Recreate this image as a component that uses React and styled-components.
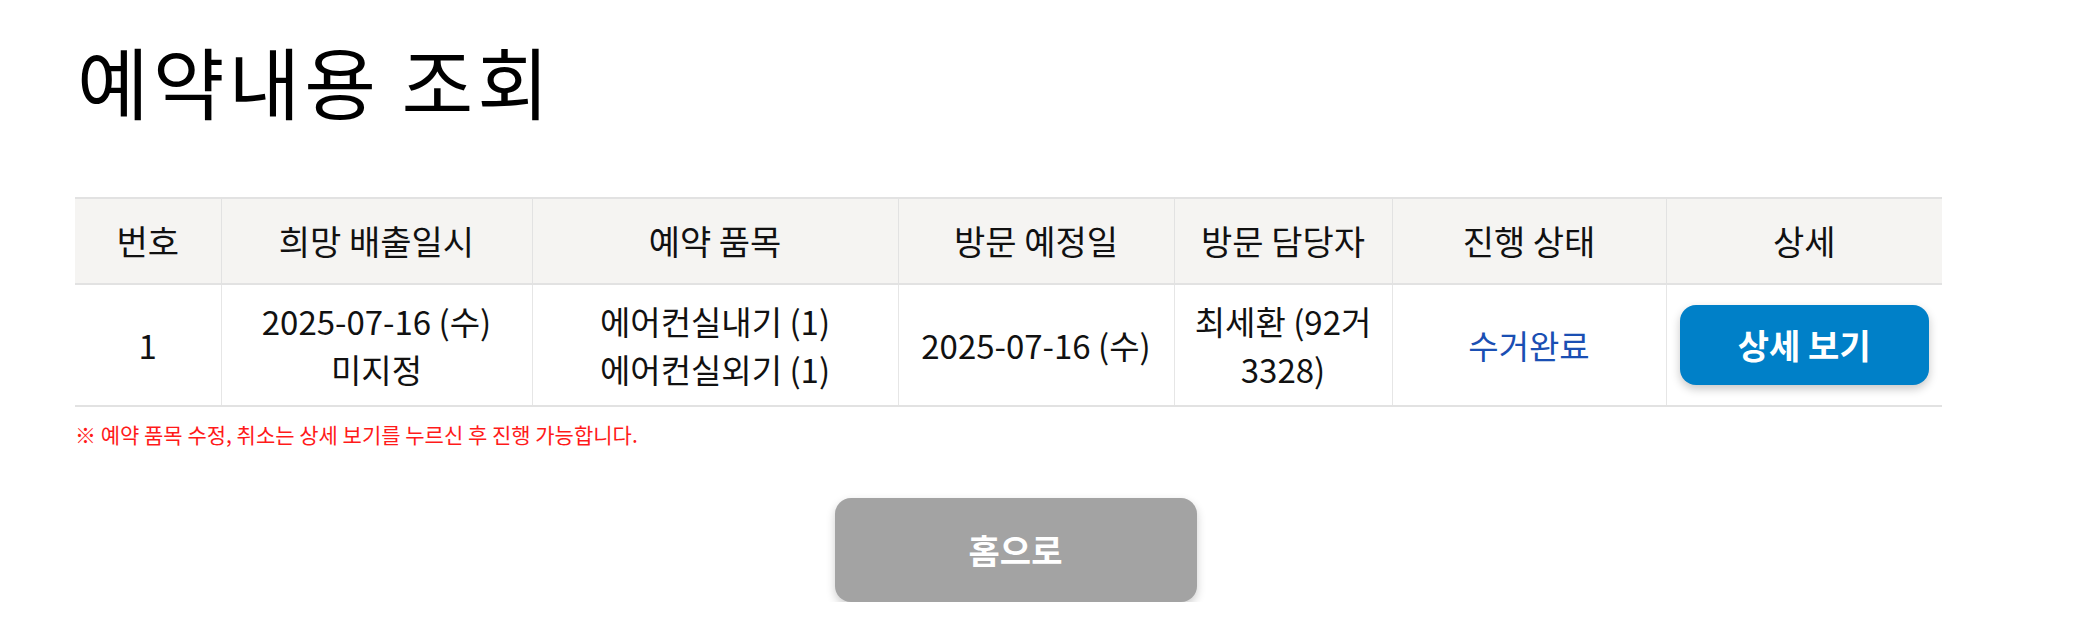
import React from "react";
import styled, { createGlobalStyle } from "styled-components";

const GlobalStyle = createGlobalStyle`
  body {
    margin: 0;
    background: #fff;
    font-family: "Noto Sans CJK KR", "Noto Sans", sans-serif;
    color: #111;
  }
`;

const reservations = [
  {
    no: 1,
    wishDate: ["2025-07-16 (수)", "미지정"],
    items: ["에어컨실내기 (1)", "에어컨실외기 (1)"],
    visitDate: "2025-07-16 (수)",
    manager: "최세환 (92거 3328)",
    status: "수거완료",
  },
];

const columns = [
  { label: "번호", width: 146 },
  { label: "희망 배출일시", width: 311 },
  { label: "예약 품목", width: 366 },
  { label: "방문 예정일", width: 276 },
  { label: "방문 담당자", width: 218 },
  { label: "진행 상태", width: 274 },
  { label: "상세", width: 276 },
];

export default function App() {
  return (
    <Page>
      <GlobalStyle />
      <Title>예약내용 조회</Title>

      <Table>
        <colgroup>
          {columns.map((c) => (
            <col key={c.label} style={{ width: c.width }} />
          ))}
        </colgroup>
        <thead>
          <tr>
            {columns.map((c) => (
              <Th key={c.label}>{c.label}</Th>
            ))}
          </tr>
        </thead>
        <tbody>
          {reservations.map((r) => (
            <tr key={r.no}>
              <Td>{r.no}</Td>
              <Td>
                {r.wishDate.map((line) => (
                  <Line key={line}>{line}</Line>
                ))}
              </Td>
              <Td>
                {r.items.map((line) => (
                  <Line key={line}>{line}</Line>
                ))}
              </Td>
              <Td>{r.visitDate}</Td>
              <Td $narrow>{r.manager}</Td>
              <Td>
                <Status>{r.status}</Status>
              </Td>
              <Td $pad>
                <DetailButton>상세 보기</DetailButton>
              </Td>
            </tr>
          ))}
        </tbody>
      </Table>

      <Notice>※ 예약 품목 수정, 취소는 상세 보기를 누르신 후 진행 가능합니다.</Notice>

      <Footer>
        <HomeButton>홈으로</HomeButton>
      </Footer>
    </Page>
  );
}

const Page = styled.div`
  width: 1867px;
  padding: 34px 0 0 75px;
`;

const Title = styled.h1`
  margin: 0 0 69px 2px;
  font-size: 78px;
  font-weight: 400;
  letter-spacing: 4px;
  line-height: 1.2;
  color: #000;
`;

const Table = styled.table`
  width: 100%;
  border-collapse: collapse;
  table-layout: fixed;
  border-top: 2px solid #e2e2e2;
`;

const Th = styled.th`
  height: 84px;
  padding: 0;
  background: #f5f4f2;
  border-bottom: 2px solid #e2e2e2;
  border-left: 1px solid #e2e2e2;
  font-size: 34px;
  font-weight: 400;
  color: #111;
  &:first-child {
    border-left: none;
  }
`;

const Td = styled.td`
  height: 120px;
  padding: ${(p) => (p.$pad ? "0 13px" : p.$narrow ? "0 12px" : "0 8px")};
  border-bottom: 2px solid #e2e2e2;
  border-left: 1px solid #e6e6e6;
  text-align: center;
  font-size: 33px;
  line-height: 48px;
  color: #111;
  &:first-child {
    border-left: none;
  }
`;

const Line = styled.div`
  white-space: nowrap;
`;

const Status = styled.span`
  color: #1a4fb3;
`;

const DetailButton = styled.button`
  width: 100%;
  height: 80px;
  border: none;
  border-radius: 16px;
  background: #0080c8;
  color: #fff;
  font-family: inherit;
  font-size: 34px;
  font-weight: 700;
  box-shadow: 0 4px 10px rgba(0, 0, 0, 0.22);
  cursor: pointer;
`;

const Notice = styled.p`
  margin: 12px 0 0;
  font-size: 21px;
  color: #ff1a1a;
`;

const Footer = styled.div`
  display: flex;
  justify-content: center;
  margin: 49px 0 0 14px;
`;

const HomeButton = styled.button`
  width: 362px;
  height: 104px;
  border: none;
  border-radius: 16px;
  background: #a3a3a3;
  color: #fff;
  font-family: inherit;
  font-size: 34px;
  font-weight: 700;
  box-shadow: 0 4px 10px rgba(0, 0, 0, 0.2);
  cursor: pointer;
`;
